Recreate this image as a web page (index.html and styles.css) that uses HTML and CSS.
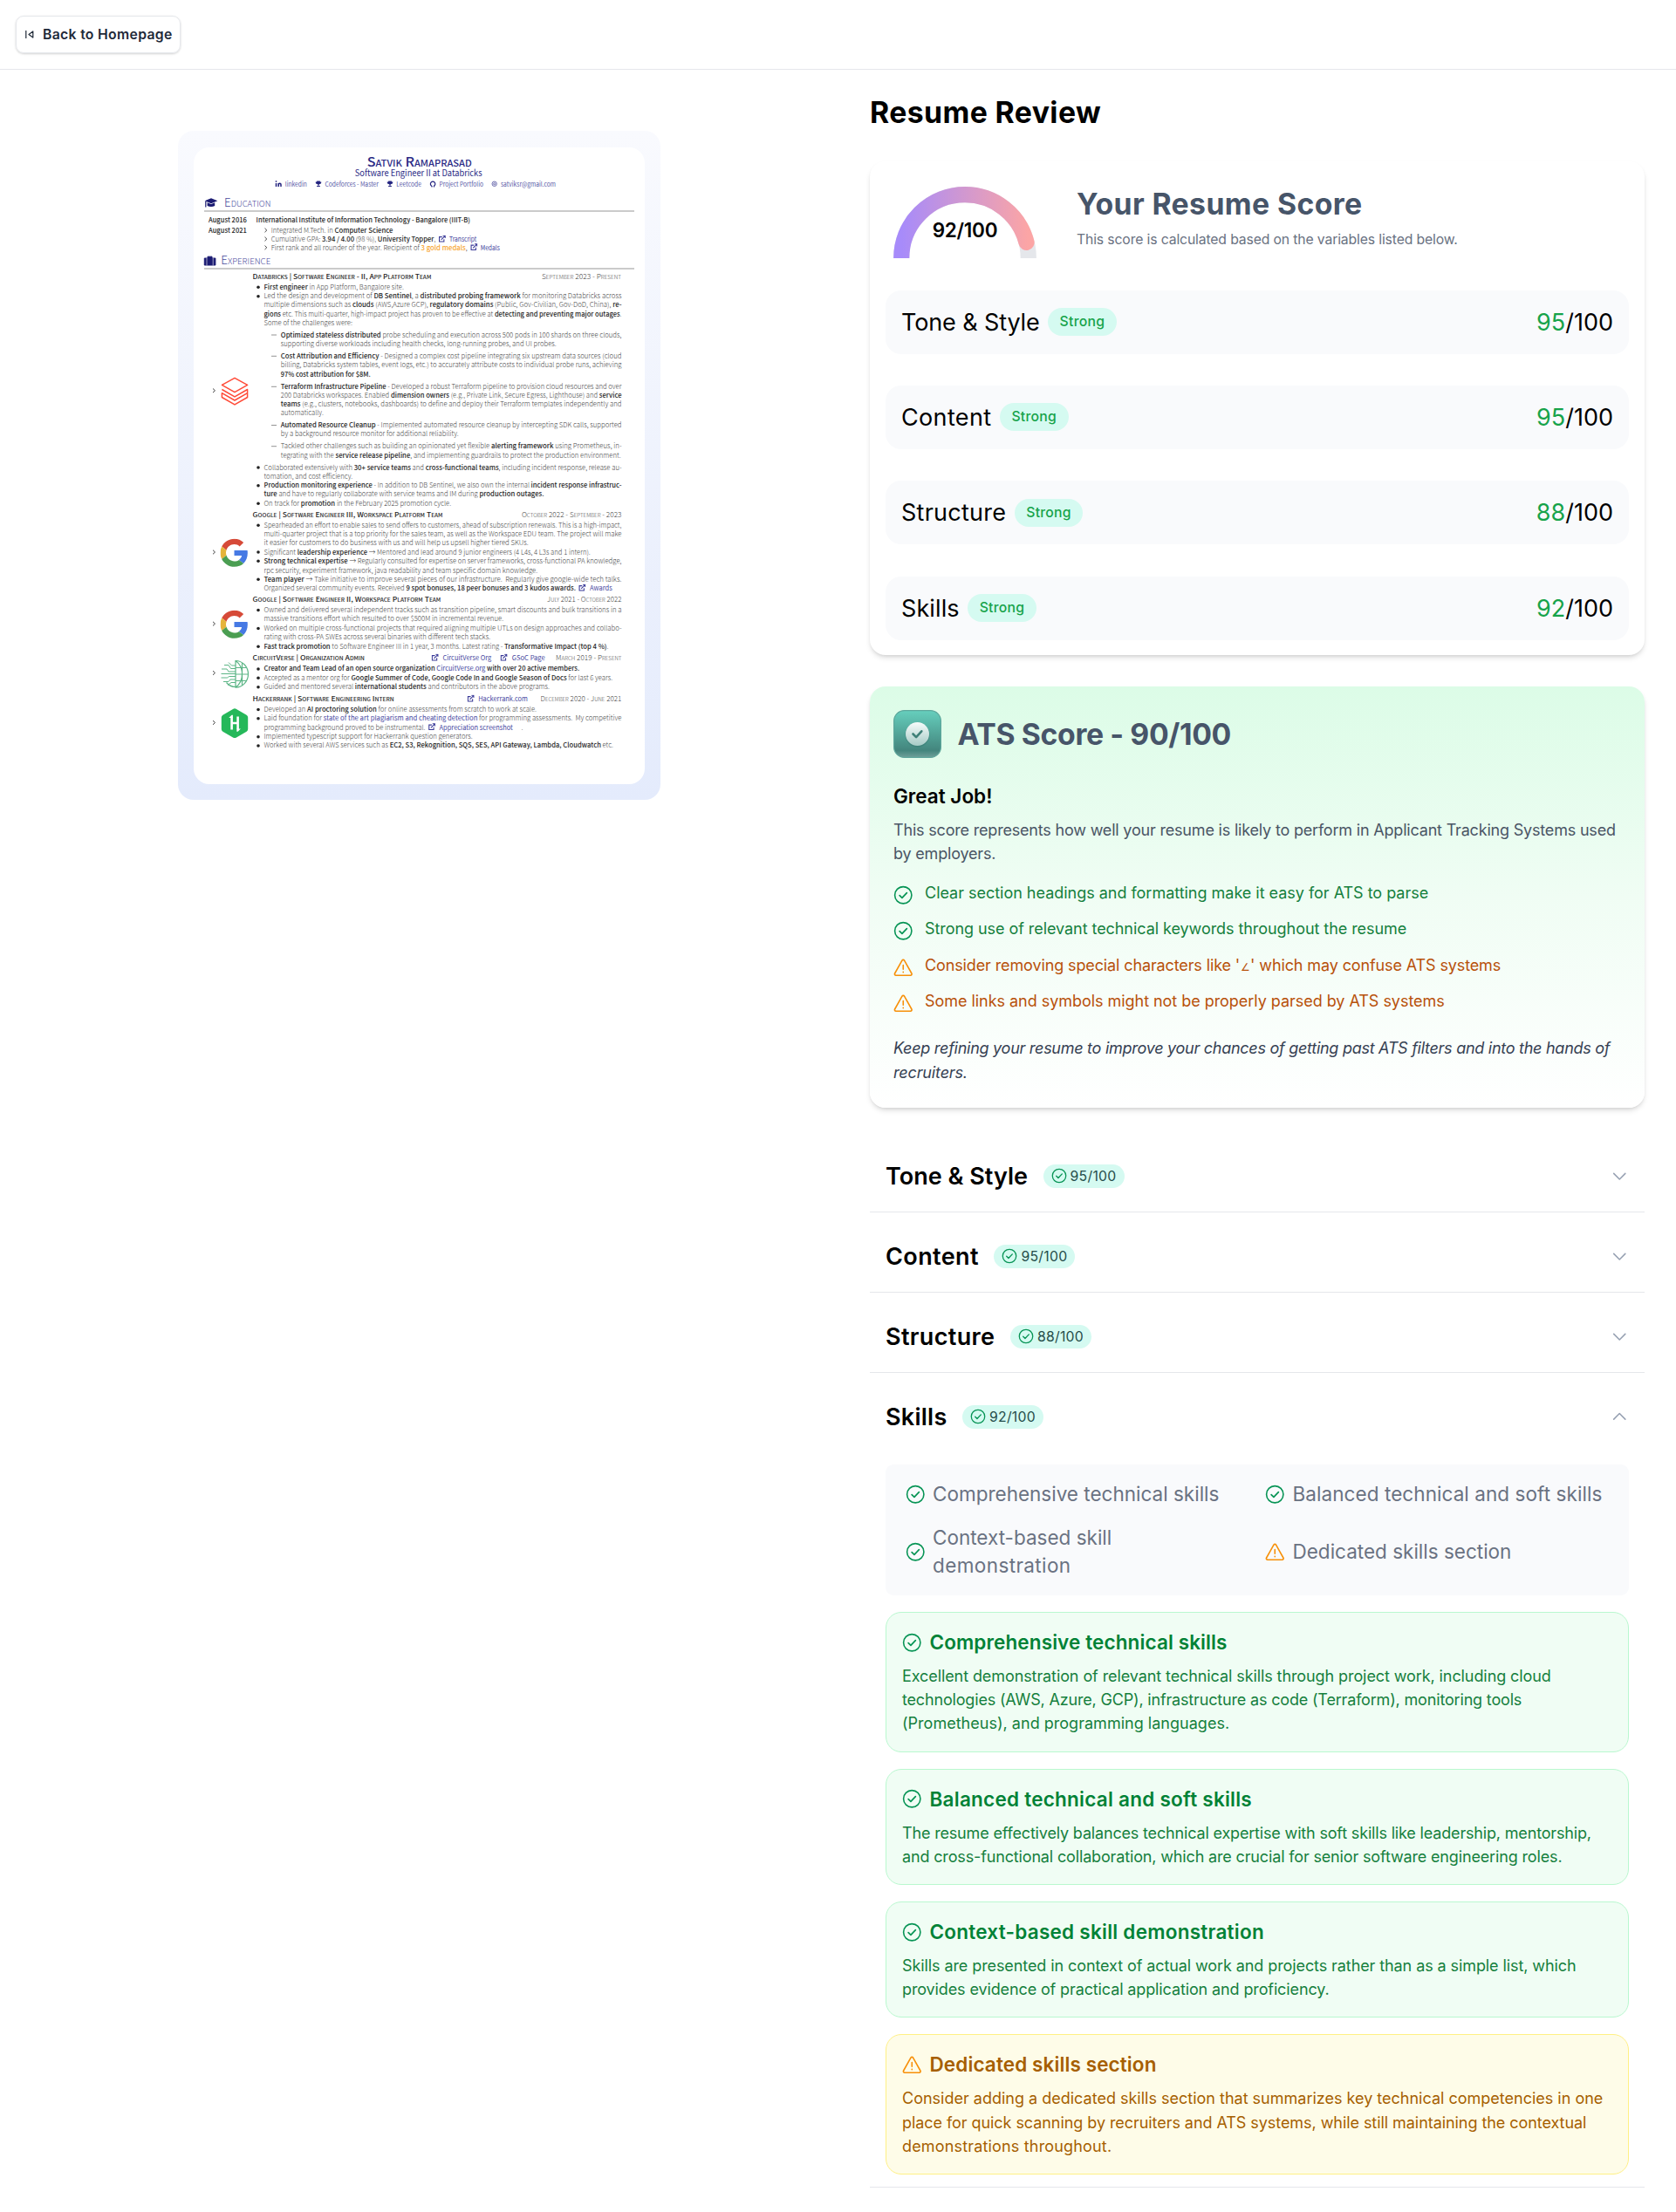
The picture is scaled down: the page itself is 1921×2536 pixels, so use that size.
FILE: index.html
```html
<!DOCTYPE html>
<html lang="en">
<head>
<meta charset="utf-8">
<title>Resume Review</title>
<link rel="stylesheet" href="styles.css">
</head>
<body>
<svg class="defs" aria-hidden="true">
  <symbol id="check" viewBox="0 0 24 24"><circle cx="12" cy="12" r="10.3" fill="none" stroke="#079455" stroke-width="1.7"/><path d="M7.6 12.4l3 3 5.8-6.2" fill="none" stroke="#079455" stroke-width="1.8" stroke-linecap="round" stroke-linejoin="round"/></symbol>
  <symbol id="warn" viewBox="0 0 24 24"><path d="M10.6 3.4L1.7 19.2a1.6 1.6 0 0 0 1.4 2.4h17.8a1.6 1.6 0 0 0 1.4-2.4L13.4 3.4a1.6 1.6 0 0 0-2.8 0z" fill="none" stroke="#f79009" stroke-width="1.7" stroke-linejoin="round"/><path d="M12 9v5M12 17.4v.4" fill="none" stroke="#f79009" stroke-width="1.7" stroke-linecap="round"/></symbol>
  <symbol id="chevron" viewBox="0 0 24 24"><path d="M19 9l-7 7-7-7" fill="none" stroke="#98a2b3" stroke-width="1.7" stroke-linecap="round" stroke-linejoin="round"/></symbol>
  <symbol id="ext" viewBox="0 0 16 16"><path d="M12 9v5H2V4h6M6 10l8-8M9.500 1.500H14.500V6.500" fill="none" stroke="#3a3a98" stroke-width="2"/></symbol>
  <symbol id="trophy" viewBox="0 0 16 16"><path d="M4 1h8v2h3c0 4-1.500 5-4 5.500L9 10v3h3v2H4v-2h3v-3L5 8.500C2.500 8 1 7 1 3h3z" fill="#23237f"/></symbol>
  <symbol id="google" viewBox="0 0 48 48"><path d="M24 9.500c3.540 0 6.710 1.220 9.210 3.600l6.850-6.850C35.900 2.380 30.470 0 24 0 14.620 0 6.510 5.380 2.560 13.220l7.980 6.190C12.430 13.720 17.740 9.500 24 9.500z" fill="#d64a38"/><path d="M46.980 24.550c0-1.570-.15-3.090-.38-4.550H24v9.020h12.940c-.58 2.960-2.260 5.480-4.780 7.180l7.730 6c4.510-4.180 7.090-10.360 7.090-17.650z" fill="#4679e4"/><path d="M10.530 28.590A14.500 14.500 0 0 1 9.770 24c0-1.600.27-3.140.76-4.590l-7.980-6.190A23.900 23.900 0 0 0 0 24c0 3.880.92 7.540 2.560 10.780l7.970-6.190z" fill="#e5b43a"/><path d="M24 48c6.480 0 11.930-2.130 15.890-5.810l-7.730-6c-2.150 1.450-4.920 2.300-8.160 2.300-6.260 0-11.570-4.220-13.470-9.910l-7.980 6.190C6.510 42.620 14.620 48 24 48z" fill="#4b9e52"/></symbol>
</svg>

<nav class="nav">
  <a class="back">
    <svg class="back-icon" viewBox="0 0 10 9"><path d="M.8 0v9M8.800 .9v7.200L4 4.500z" fill="none" stroke="#1f2937" stroke-width="1.200" stroke-linejoin="round"/></svg>
    <span class="back-text">Back to Homepage</span>
  </a>
</nav>

<main class="layout">
  <section class="preview">
    <div class="frame">
      <svg class="resume" viewBox="222 169 517 730" role="img" aria-label="Resume of Satvik Ramaprasad">
        <g class="navy">
          <text class="name sc" x="420.700" y="191.300" textLength="120" lengthAdjust="spacingAndGlyphs">Satvik Ramaprasad</text>
          <text class="role" x="406.800" y="201.500" textLength="145.700" lengthAdjust="spacingAndGlyphs">Software Engineer II at Databricks</text>
        </g>
        <g class="link">
          <text x="326.800" y="213.700" textLength="25" lengthAdjust="spacingAndGlyphs">linkedin</text>
          <text x="372.500" y="213.700" textLength="61.400" lengthAdjust="spacingAndGlyphs">Codeforces - Master</text>
          <text x="454.300" y="213.700" textLength="28.600" lengthAdjust="spacingAndGlyphs">Leetcode</text>
          <text x="503.600" y="213.700" textLength="50.400" lengthAdjust="spacingAndGlyphs">Project Portfolio</text>
          <text x="574" y="213.700" textLength="63" lengthAdjust="spacingAndGlyphs">satviksr@gmail.com</text>
        </g>
        <path d="M316.500 210v4M316.500 207.300v1.400M319.200 214v-4M319.200 211.500c0-1.600 2.800-1.600 2.800 0v2.500" fill="none" stroke="#23237f" stroke-width="1.500"/>
        <use href="#trophy" x="361" y="207" width="8" height="7.500"/>
        <use href="#trophy" x="443" y="207" width="8" height="7.500"/>
        <path d="M494.700 213.200a2.700 2.700 0 1 1 2.800 0v1.300M495 214.500v-1.500" fill="none" stroke="#23237f" stroke-width="1.200"/>
        <circle cx="566.700" cy="210.800" r="2.700" fill="none" stroke="#4a4a9c" stroke-width=".8"/><circle cx="566.700" cy="210.800" r="1.100" fill="none" stroke="#4a4a9c" stroke-width=".8"/>
        <path d="M234.600 230.200l7.400-3 7.400 3-7.400 3zM237.600 232.200v3.800q4.400 2.200 8.600 0v-3.800l-4.200 1.800zM235.200 231v6.500h1.200v-6.500z" fill="#1b1b72"/>
        <text class="head sc" x="257.100" y="237" textLength="53.300" lengthAdjust="spacingAndGlyphs">Education</text>
        <path d="M234 242h493M234 308h493" stroke="#cbcbcb" stroke-width="1.800"/>
        <path d="M234.300 296h12.600v8h-12.600zM238 296v-1.800h5v1.800" fill="#1b1b72" stroke="#1b1b72" stroke-width="1"/><path d="M237 295.500v9M244.200 295.500v9" stroke="#fff" stroke-width=".6"/>
        <text class="head sc" x="253.200" y="303.300" textLength="57" lengthAdjust="spacingAndGlyphs">Experience</text>

        <g class="body">
          <text class="b" x="239" y="255.300" textLength="43.900" lengthAdjust="spacingAndGlyphs">August 2016</text>
          <text class="b" x="293.600" y="255.300" textLength="245.400" lengthAdjust="spacingAndGlyphs">International Institute of Information Technology - Bangalore (IIIT-B)</text>
          <text class="b" x="239" y="266.700" textLength="43.900" lengthAdjust="spacingAndGlyphs">August 2021</text>
          <text x="310.700" y="266.700" textLength="139.700" lengthAdjust="spacingAndGlyphs">Integrated M.Tech. in <tspan class="b">Computer Science</tspan></text>
          <text x="310.700" y="277" textLength="188.600" lengthAdjust="spacingAndGlyphs">Cumulative GPA: <tspan class="b">3.94 / 4.00</tspan> (98 %), <tspan class="b">University Topper</tspan>,</text>
          <text class="l" x="515" y="277" textLength="31.400" lengthAdjust="spacingAndGlyphs">Transcript</text>
          <text x="310.700" y="286.700" textLength="225" lengthAdjust="spacingAndGlyphs">First rank and all rounder of the year. Recipient of <tspan class="gold">3 gold medals</tspan>,</text>
          <text class="l" x="550.700" y="286.700" textLength="22.200" lengthAdjust="spacingAndGlyphs">Medals</text>

          <text class="b sc" x="289.600" y="319.700" textLength="204.700" lengthAdjust="spacingAndGlyphs">Databricks | Software Engineer - II, App Platform Team</text>
          <text class="sc" x="621" y="319.700" textLength="91" lengthAdjust="spacingAndGlyphs">September 2023 - Present</text>
          <text x="302.500" y="331.700" textLength="160.400" lengthAdjust="spacingAndGlyphs"><tspan class="b">First engineer</tspan> in App Platform, Bangalore site.</text>
          <text x="302.500" y="342.300" textLength="410" lengthAdjust="spacingAndGlyphs">Led the design and development of <tspan class="b">DB Sentinel</tspan>, a <tspan class="b">distributed probing framework</tspan> for monitoring Databricks across</text>
          <text x="302.500" y="352.300" textLength="410" lengthAdjust="spacingAndGlyphs">multiple dimensions such as <tspan class="b">clouds</tspan> (AWS,Azure GCP), <tspan class="b">regulatory domains</tspan> (Public, Gov-Civilian, Gov-DoD, China), <tspan class="b">re-</tspan></text>
          <text x="302.500" y="363" textLength="410" lengthAdjust="spacingAndGlyphs"><tspan class="b">gions</tspan> etc. This multi-quarter, high-impact project has proven to be effective at <tspan class="b">detecting and preventing major outages</tspan>.</text>
          <text x="302.500" y="373.300" textLength="101.400" lengthAdjust="spacingAndGlyphs">Some of the challenges were:</text>
          <text x="321.800" y="386.700" textLength="390.700" lengthAdjust="spacingAndGlyphs"><tspan class="b">Optimized stateless distributed</tspan> probe scheduling and execution across 500 pods in 100 shards on three clouds,</text>
          <text x="321.800" y="397" textLength="316" lengthAdjust="spacingAndGlyphs">supporting diverse workloads including health checks, long-running probes, and UI probes.</text>
          <text x="321.800" y="410.700" textLength="390.700" lengthAdjust="spacingAndGlyphs"><tspan class="b">Cost Attribution and Efficiency</tspan> - Designed a complex cost pipeline integrating six upstream data sources (cloud</text>
          <text x="321.800" y="421.300" textLength="390.700" lengthAdjust="spacingAndGlyphs">billing, Databricks system tables, event logs, etc.) to accurately attribute costs to individual probe runs, achieving</text>
          <text class="b" x="321.800" y="431.700" textLength="102.900" lengthAdjust="spacingAndGlyphs">97% cost attribution for $8M.</text>
          <text x="321.800" y="445.700" textLength="390.700" lengthAdjust="spacingAndGlyphs"><tspan class="b">Terraform Infrastructure Pipeline</tspan> - Developed a robust Terraform pipeline to provision cloud resources and over</text>
          <text x="321.800" y="456" textLength="390.700" lengthAdjust="spacingAndGlyphs">200 Databricks workspaces. Enabled <tspan class="b">dimension owners</tspan> (e.g., Private Link, Secure Egress, Lighthouse) and <tspan class="b">service</tspan></text>
          <text x="321.800" y="466" textLength="390.700" lengthAdjust="spacingAndGlyphs"><tspan class="b">teams</tspan> (e.g., clusters, notebooks, dashboards) to define and deploy their Terraform templates independently and</text>
          <text x="321.800" y="476.300" textLength="49" lengthAdjust="spacingAndGlyphs">automatically.</text>
          <text x="321.800" y="490" textLength="390.700" lengthAdjust="spacingAndGlyphs"><tspan class="b">Automated Resource Cleanup</tspan> - Implemented automated resource cleanup by intercepting SDK calls, supported</text>
          <text x="321.800" y="500.300" textLength="203.900" lengthAdjust="spacingAndGlyphs">by a background resource monitor for additional reliability.</text>
          <text x="321.800" y="514" textLength="390.700" lengthAdjust="spacingAndGlyphs">Tackled other challenges such as building an opinionated yet flexible <tspan class="b">alerting framework</tspan> using Prometheus, in-</text>
          <text x="321.800" y="524.700" textLength="390" lengthAdjust="spacingAndGlyphs">tegrating with the <tspan class="b">service release pipeline</tspan>, and implementing guardrails to protect the production environment.</text>
          <text x="302.500" y="538.700" textLength="410" lengthAdjust="spacingAndGlyphs">Collaborated extensively with <tspan class="b">30+ service teams</tspan> and <tspan class="b">cross-functional teams</tspan>, including incident response, release au-</text>
          <text x="302.500" y="548.700" textLength="101.800" lengthAdjust="spacingAndGlyphs">tomation, and cost efficiency.</text>
          <text x="302.500" y="559.300" textLength="410" lengthAdjust="spacingAndGlyphs"><tspan class="b">Production monitoring experience</tspan> - In addition to DB Sentinel, we also own the internal <tspan class="b">incident response infrastruc-</tspan></text>
          <text x="302.500" y="569.300" textLength="321" lengthAdjust="spacingAndGlyphs"><tspan class="b">ture</tspan> and have to regularly collaborate with service teams and IM during <tspan class="b">production outages.</tspan></text>
          <text x="302.500" y="579.700" textLength="214.600" lengthAdjust="spacingAndGlyphs">On track for <tspan class="b">promotion</tspan> in the February 2025 promotion cycle.</text>

          <text class="b sc" x="289.600" y="592.700" textLength="217.900" lengthAdjust="spacingAndGlyphs">Google | Software Engineer III, Workspace Platform Team</text>
          <text class="sc" x="597.900" y="592.700" textLength="114.600" lengthAdjust="spacingAndGlyphs">October 2022 - September - 2023</text>
          <text x="302.500" y="604.700" textLength="410" lengthAdjust="spacingAndGlyphs">Spearheaded an effort to enable sales to send offers to customers, ahead of subscription renewals. This is a high-impact,</text>
          <text x="302.500" y="615" textLength="410" lengthAdjust="spacingAndGlyphs">multi-quarter project that is a top priority for the sales team, as well as the Workspace EDU team. The project will make</text>
          <text x="302.500" y="625.300" textLength="303.200" lengthAdjust="spacingAndGlyphs">it easier for customers to do business with us and will help us upsell higher tiered SKUs.</text>
          <text x="302.500" y="635.700" textLength="374.300" lengthAdjust="spacingAndGlyphs">Significant <tspan class="b">leadership experience</tspan> → Mentored and lead around 9 junior engineers (4 L4s, 4 L3s and 1 intern).</text>
          <text x="302.500" y="646" textLength="410" lengthAdjust="spacingAndGlyphs"><tspan class="b">Strong technical expertise</tspan> → Regularly consulted for expertise on server frameworks, cross-functional PA knowledge,</text>
          <text x="302.500" y="656.700" textLength="313.600" lengthAdjust="spacingAndGlyphs">rpc security, experiment framework, java readability and team specific domain knowledge.</text>
          <text x="302.500" y="667" textLength="410" lengthAdjust="spacingAndGlyphs"><tspan class="b">Team player</tspan> → Take initiative to improve several pieces of our infrastructure.&#160; Regularly give google-wide tech talks.</text>
          <text x="302.500" y="677" textLength="357.500" lengthAdjust="spacingAndGlyphs">Organized several community events. Received <tspan class="b">9 spot bonuses, 18 peer bonuses and 3 kudos awards.</tspan></text>
          <text class="l" x="676" y="677" textLength="25.800" lengthAdjust="spacingAndGlyphs">Awards</text>

          <text class="b sc" x="289.600" y="690" textLength="215.700" lengthAdjust="spacingAndGlyphs">Google | Software Engineer II, Workspace Platform Team</text>
          <text class="sc" x="627.100" y="690" textLength="85.300" lengthAdjust="spacingAndGlyphs">July 2021 - October 2022</text>
          <text x="302.500" y="702" textLength="410" lengthAdjust="spacingAndGlyphs">Owned and delivered several independent tracks such as transition pipeline, smart discounts and bulk transitions in a</text>
          <text x="302.500" y="712.300" textLength="274.600" lengthAdjust="spacingAndGlyphs">massive transitions effort which resulted to over $500M in incremental revenue.</text>
          <text x="302.500" y="723" textLength="410" lengthAdjust="spacingAndGlyphs">Worked on multiple cross-functional projects that required aligning multiple UTLs on design approaches and collabo-</text>
          <text x="302.500" y="733.300" textLength="259.600" lengthAdjust="spacingAndGlyphs">rating with cross-PA SWEs across several binaries with different tech stacks.</text>
          <text x="302.500" y="744" textLength="395" lengthAdjust="spacingAndGlyphs"><tspan class="b">Fast track promotion</tspan> to Software Engineer III in 1 year, 3 months. Latest rating - <tspan class="b">Transformative Impact (top 4 %)</tspan>.</text>

          <text class="b sc" x="289.600" y="757.300" textLength="128.200" lengthAdjust="spacingAndGlyphs">CircuitVerse | Organization Admin</text>
          <text class="l" x="507.500" y="757.300" textLength="55.700" lengthAdjust="spacingAndGlyphs">CircuitVerse Org</text>
          <text class="l" x="586.800" y="757.300" textLength="37.900" lengthAdjust="spacingAndGlyphs">GSoC Page</text>
          <text class="sc" x="637.100" y="757.300" textLength="75.400" lengthAdjust="spacingAndGlyphs">March 2019 - Present</text>
          <text class="b" x="302.500" y="769.300" textLength="361.800" lengthAdjust="spacingAndGlyphs">Creator and Team Lead of an open source organization <tspan class="l">CircuitVerse.org</tspan> with over 20 active members.</text>
          <text x="302.500" y="780" textLength="399.600" lengthAdjust="spacingAndGlyphs">Accepted as a mentor org for <tspan class="b">Google Summer of Code, Google Code In and Google Season of Docs</tspan> for last 6 years.</text>
          <text x="302.500" y="790" textLength="327.500" lengthAdjust="spacingAndGlyphs">Guided and mentored several <tspan class="b">international students</tspan> and contributors in the above programs.</text>

          <text class="b sc" x="289.600" y="804" textLength="162" lengthAdjust="spacingAndGlyphs">Hackerrank | Software Engineering Intern</text>
          <text class="l" x="548.200" y="804" textLength="56.800" lengthAdjust="spacingAndGlyphs">Hackerrank.com</text>
          <text class="sc" x="619.600" y="804" textLength="92.800" lengthAdjust="spacingAndGlyphs">December 2020 - June 2021</text>
          <text x="302.500" y="816" textLength="312.500" lengthAdjust="spacingAndGlyphs">Developed an <tspan class="b">AI proctoring solution</tspan> for online assessments from scratch to work at scale.</text>
          <text x="302.500" y="826.300" textLength="410" lengthAdjust="spacingAndGlyphs">Laid foundation for <tspan class="l">state of the art plagiarism and cheating detection</tspan> for programming assessments.&#160; My competitive</text>
          <text x="302.500" y="836.700" textLength="185" lengthAdjust="spacingAndGlyphs">programming background proved to be instrumental.</text>
          <text class="l" x="503.600" y="836.700" textLength="84.300" lengthAdjust="spacingAndGlyphs">Appreciation screenshot</text>
          <text x="597.500" y="836.700">.</text>
          <text x="302.500" y="847" textLength="239.300" lengthAdjust="spacingAndGlyphs">Implemented typescript support for Hackerrank question generators.</text>
          <text x="302.500" y="857.300" textLength="400.400" lengthAdjust="spacingAndGlyphs">Worked with several AWS services such as <tspan class="b">EC2, S3, Rekognition, SQS, SES, API Gateway, Lambda, Cloudwatch</tspan> etc.</text>
        </g>

        <g fill="#222">
          <circle cx="296" cy="329.300" r="1.800"/><circle cx="296" cy="339.700" r="1.800"/><circle cx="296" cy="536" r="1.800"/><circle cx="296" cy="556.700" r="1.800"/><circle cx="296" cy="577.300" r="1.800"/><circle cx="296" cy="602.300" r="1.800"/><circle cx="296" cy="633" r="1.800"/><circle cx="296" cy="643.300" r="1.800"/><circle cx="296" cy="664.300" r="1.800"/><circle cx="296" cy="699.500" r="1.800"/><circle cx="296" cy="720.500" r="1.800"/><circle cx="296" cy="741.300" r="1.800"/><circle cx="296" cy="767" r="1.800"/><circle cx="296" cy="777.300" r="1.800"/><circle cx="296" cy="787.700" r="1.800"/><circle cx="296" cy="813.500" r="1.800"/><circle cx="296" cy="823.700" r="1.800"/><circle cx="296" cy="844.700" r="1.800"/><circle cx="296" cy="855" r="1.800"/>
        </g>
        <path d="M311 384h6M311 408.300h6M311 443.300h6M311 487.500h6M311 511.700h6" stroke="#888" stroke-width=".9"/>
        <path d="M303.500 261.800l2.300 2.200-2.300 2.200M303.500 271.800l2.300 2.200-2.300 2.200M303.500 281.600l2.300 2.200-2.300 2.200M244 445.500l2.500 2.300-2.500 2.300M244 630.700l2.500 2.300-2.500 2.300M244 712.800l2.500 2.300-2.500 2.300M244 769.200l2.500 2.300-2.500 2.300M244 826.200l2.500 2.300-2.500 2.300" fill="none" stroke="#444" stroke-width="1"/>
        <use href="#ext" x="502.500" y="269.500" width="8.500" height="8.500"/><use href="#ext" x="539" y="279" width="8.500" height="8.500"/>
        <use href="#ext" x="663" y="669.500" width="8.500" height="8.500"/><use href="#ext" x="494.300" y="749.500" width="8.500" height="8.500"/><use href="#ext" x="573.200" y="749.500" width="8.500" height="8.500"/><use href="#ext" x="535.300" y="796.500" width="8.500" height="8.500"/><use href="#ext" x="490.700" y="829" width="8.500" height="8.500"/>

        <g fill="none" stroke="#ff4b38" stroke-width="1.500" stroke-linejoin="round">
          <path d="M269 433.300l14.600 8-14.600 8.400-14.600-8.400zM254.400 446.500l14.600 8.400 14.600-8.400v4.200l-14.600 8.300-14.600-8.300v4.800l14.600 8.400 14.600-8.400v-4.800"/>
        </g>
        <use href="#google" x="252.500" y="617.500" width="32" height="32.500"/>
        <use href="#google" x="252.500" y="699.500" width="32" height="32.500"/>
        <g fill="none" stroke="#5cb586" stroke-width="1.200">
          <path d="M270 757.500a14.500 15.300 0 0 1 0 30.600zM270 757.500c10 7 10 23.600 0 30.600M277.500 760v25.500M270 765.500h12M270 773h14M270 780.500h12M270 787.500c-4.500 0-8-2-10.500-5"/>
          <path d="M254 767h6l2 3h8M257 762.500h5l2.500 4H270M262 759.500l3.500 3.500H270M253.500 772.500h16.500M253.500 777h7l2-1.500h7.500M256 781.500h6l2-2.500h6M261 785.500l4-3h5" stroke-width="1"/>
        </g>
        <path d="M269 812.300q1 0 2 .6l11.600 6.800q1.600 1 1.600 2.800v13.400q0 1.800-1.600 2.800L271 845.400q-2 1-4 0l-11.600-6.700q-1.600-1-1.600-2.800v-13.400q0-1.800 1.600-2.800l11.600-6.800q1-.6 2-.6z" fill="#25b85a"/>
        <path d="M265.600 822v14.500M272.600 821.500v14.500M265.600 829h7" fill="none" stroke="#fff" stroke-width="2.600"/>
        <path d="M262.300 823l3.300-3.200 1.300 0v3.200zM275.900 835.500l-3.300 3.200-1.300 0v-3.200z" fill="#fff"/>
      </svg>
    </div>
  </section>

  <section class="review">
    <h1 class="title">Resume Review</h1>

    <div class="card score">
      <div class="score-head">
        <div class="gauge">
          <svg class="gauge-svg" viewBox="0 0 100 50">
            <defs><linearGradient id="g" x1="0" x2="1" y1="0" y2="0"><stop offset="0" stop-color="#a78bfa"/><stop offset="1" stop-color="#fca5a5"/></linearGradient></defs>
            <path d="M10 50a40 40 0 0 1 80 0" fill="none" stroke="#e5e7eb" stroke-width="10"/>
            <path d="M10 50a40 40 0 0 1 80 0" fill="none" stroke="url(#g)" stroke-width="10" stroke-linecap="round" pathLength="100" stroke-dasharray="92 200"/>
          </svg>
          <span class="gauge-text">92/100</span>
        </div>
        <div class="score-copy">
          <h2 class="h2 t40">Your Resume Score</h2>
          <p class="small">This score is calculated based on the variables listed below.</p>
        </div>
      </div>
      <div class="rows">
        <div class="row"><span class="row-name n12">Tone &amp; Style</span><span class="badge">Strong</span><span class="row-score"><span class="good">95</span>/100</span></div>
        <div class="row"><span class="row-name t35">Content</span><span class="badge">Strong</span><span class="row-score"><span class="good">95</span>/100</span></div>
        <div class="row"><span class="row-name t25">Structure</span><span class="badge">Strong</span><span class="row-score"><span class="good">88</span>/100</span></div>
        <div class="row"><span class="row-name t11">Skills</span><span class="badge">Strong</span><span class="row-score"><span class="good">92</span>/100</span></div>
      </div>
    </div>

    <div class="card ats">
      <div class="ats-head">
        <svg class="ats-icon" viewBox="0 0 55 55">
          <defs>
            <linearGradient id="tile" x1="0" x2="0" y1="0" y2="1"><stop offset="0" stop-color="#66cfbd"/><stop offset=".85" stop-color="#43857d"/><stop offset="1" stop-color="#6f9f99"/></linearGradient>
            <linearGradient id="disc" x1="0" x2="0" y1="0" y2="1"><stop offset="0" stop-color="#f7fcfb"/><stop offset="1" stop-color="#a6cbc6"/></linearGradient>
          </defs>
          <rect x=".6" y=".6" width="53.800" height="53.800" rx="12" fill="url(#tile)" stroke="#5ea79c" stroke-width="1.200"/>
          <circle cx="27.500" cy="28.500" r="14" fill="#2f6f67" opacity=".35"/>
          <circle cx="27.500" cy="27.500" r="13.500" fill="url(#disc)"/>
          <path d="M22.500 27.500l3.600 3.600 6.200-6.800" fill="none" stroke="#3f8078" stroke-width="2.600" stroke-linecap="round" stroke-linejoin="round"/>
        </svg>
        <h2 class="h2 n37">ATS Score - 90/100</h2>
      </div>
      <h3 class="great">Great Job!</h3>
      <p class="para gray"><span class="ln n19">This score represents how well your resume is likely to perform in Applicant Tracking Systems used</span><span class="ln n19">by employers.</span></p>
      <ul class="tips">
        <li class="tip ok"><svg class="icon"><use href="#check"/></svg><span class="ln n02">Clear section headings and formatting make it easy for ATS to parse</span></li>
        <li class="tip ok"><svg class="icon"><use href="#check"/></svg><span class="ln n06">Strong use of relevant technical keywords throughout the resume</span></li>
        <li class="tip amber"><svg class="icon"><use href="#warn"/></svg><span class="ln n12">Consider removing special characters like '<span class="angle">∠</span>' which may confuse ATS systems</span></li>
        <li class="tip amber"><svg class="icon"><use href="#warn"/></svg><span class="ln n04">Some links and symbols might not be properly parsed by ATS systems</span></li>
      </ul>
      <p class="para closing"><span class="ln n27">Keep refining your resume to improve your chances of getting past ATS filters and into the hands of</span><span class="ln n15">recruiters.</span></p>
    </div>

    <div class="accordion">
      <div class="item"><div class="item-head"><span class="item-name t02">Tone &amp; Style</span><span class="pill"><svg class="pill-icon"><use href="#check"/></svg>95/100</span><svg class="chev"><use href="#chevron"/></svg></div></div>
      <div class="item"><div class="item-head"><span class="item-name t40">Content</span><span class="pill"><svg class="pill-icon"><use href="#check"/></svg>95/100</span><svg class="chev"><use href="#chevron"/></svg></div></div>
      <div class="item"><div class="item-head"><span class="item-name t35">Structure</span><span class="pill"><svg class="pill-icon"><use href="#check"/></svg>88/100</span><svg class="chev"><use href="#chevron"/></svg></div></div>
      <div class="item open">
        <div class="item-head"><span class="item-name t25">Skills</span><span class="pill"><svg class="pill-icon"><use href="#check"/></svg>92/100</span><svg class="chev up"><use href="#chevron"/></svg></div>
        <div class="content">
          <div class="summary">
            <div class="sum"><svg class="icon"><use href="#check"/></svg><span class="ln">Comprehensive technical skills</span></div>
            <div class="sum"><svg class="icon"><use href="#check"/></svg><span class="ln t07">Balanced technical and soft skills</span></div>
            <div class="sum"><svg class="icon"><use href="#check"/></svg><span><span class="ln">Context-based skill</span><span class="ln t40">demonstration</span></span></div>
            <div class="sum"><svg class="icon"><use href="#warn"/></svg><span class="ln">Dedicated skills section</span></div>
          </div>
          <div class="note green">
            <div class="note-head"><svg class="icon"><use href="#check"/></svg><span class="ln t11">Comprehensive technical skills</span></div>
            <p class="para"><span class="ln n09">Excellent demonstration of relevant technical skills through project work, including cloud</span><span class="ln n17">technologies (AWS, Azure, GCP), infrastructure as code (Terraform), monitoring tools</span><span class="ln t02">(Prometheus), and programming languages.</span></p>
          </div>
          <div class="note green">
            <div class="note-head"><svg class="icon"><use href="#check"/></svg><span class="ln t25">Balanced technical and soft skills</span></div>
            <p class="para"><span class="ln n17">The resume effectively balances technical expertise with soft skills like leadership, mentorship,</span><span class="ln n15">and cross-functional collaboration, which are crucial for senior software engineering roles.</span></p>
          </div>
          <div class="note green">
            <div class="note-head"><svg class="icon"><use href="#check"/></svg><span class="ln t25">Context-based skill demonstration</span></div>
            <p class="para"><span class="ln n09">Skills are presented in context of actual work and projects rather than as a simple list, which</span><span class="ln n12">provides evidence of practical application and proficiency.</span></p>
          </div>
          <div class="note yellow">
            <div class="note-head"><svg class="icon"><use href="#warn"/></svg><span class="ln t11">Dedicated skills section</span></div>
            <p class="para"><span class="ln">Consider adding a dedicated skills section that summarizes key technical competencies in one</span><span class="ln n06">place for quick scanning by recruiters and ATS systems, while still maintaining the contextual</span><span class="ln t17">demonstrations throughout.</span></p>
          </div>
        </div>
      </div>
    </div>
  </section>
</main>
</body>
</html>
```
FILE: styles.css
```css
* { box-sizing: border-box; }
body, h1, h2, h3, p, ul { margin: 0; padding: 0; }
body { background: #fff; color: #000; font-family: Inter, "Liberation Sans", sans-serif; font-size: 18px; line-height: 27px; }
ul { list-style: none; }
svg { display: block; flex: none; }
.defs { display: none; }

/* per-line tracking */
.n37 { letter-spacing: -.37px; }
.n27 { letter-spacing: -.27px; }
.n19 { letter-spacing: -.19px; }
.n17 { letter-spacing: -.17px; }
.n15 { letter-spacing: -.15px; }
.n12 { letter-spacing: -.12px; }
.n09 { letter-spacing: -.09px; }
.n06 { letter-spacing: -.06px; }
.n04 { letter-spacing: -.04px; }
.n02 { letter-spacing: -.02px; }
.t02 { letter-spacing: .02px; }
.t07 { letter-spacing: .07px; }
.t11 { letter-spacing: .11px; }
.t17 { letter-spacing: .17px; }
.t25 { letter-spacing: .25px; }
.t35 { letter-spacing: .35px; }
.t40 { letter-spacing: .4px; }
.ln { display: block; white-space: nowrap; }

.nav { display: flex; height: 80px; padding: 18px; border-bottom: 1px solid #e5e7eb; }
.back { display: flex; align-items: center; gap: 10px; width: 189px; height: 43px; padding: 0 10px; border: 1px solid #e5e7eb; border-radius: 9px; box-shadow: 0 1px 3px rgba(0,0,0,.1), 0 1px 2px rgba(0,0,0,.08); }
.back-icon { width: 10px; height: 9px; }
.back-text { color: #1e2939; font-size: 15.75px; font-weight: 600; letter-spacing: .32px; white-space: nowrap; }

.layout { display: grid; grid-template-columns: 961px 960px; align-items: start; }
.preview { display: flex; justify-content: center; padding-top: 70px; }
.frame { width: 553px; height: 767px; padding: 19px 18px 18px; border-radius: 18px; background: linear-gradient(#f9fafe, #e4ebfc); }
.resume { width: 517px; height: 730px; border-radius: 18px; background: #fff; font-family: "Noto Sans CJK SC", "Noto Sans", sans-serif; }
.sc { font-variant: small-caps; }
.name { font-size: 14.5px; font-weight: 500; }
.role { font-size: 10px; }
.navy { fill: #2a2a85; }
.link { fill: #5a5aa8; font-size: 7.5px; }
.head { fill: #4a4a9c; font-size: 12.5px; font-weight: 300; }
.body { fill: #484848; font-size: 7.9px; font-weight: 300; }
.b { fill: #262626; font-weight: 500; }
.l { fill: #4646a0; font-weight: 400; }
.gold { fill: #f7a52f; font-weight: 500; }

.review { display: flex; flex-direction: column; padding: 29px 36px 31px; }
.title { margin-bottom: 36px; font-size: 33.75px; line-height: 40px; font-weight: 700; letter-spacing: .42px; }
.card { border-radius: 18px; box-shadow: 0 4px 6px -1px rgba(0,0,0,.13), 0 2px 4px -2px rgba(0,0,0,.13); }
.h2 { color: #475569; font-size: 33.75px; line-height: 40px; font-weight: 700; white-space: nowrap; }

.score { height: 566px; padding: 19.5px 18px 18px; }
.score-head { display: flex; align-items: center; gap: 37px; margin-bottom: 37px; }
.gauge { position: relative; width: 182px; height: 91px; }
.gauge-svg { width: 182px; height: 91px; }
.gauge-text { position: absolute; left: 0; right: 0; top: 45px; text-align: center; font-size: 22.5px; font-weight: 600; letter-spacing: -.26px; }
.score-copy { display: flex; flex-direction: column; gap: 9.5px; }
.small { color: #6a7282; font-size: 15.75px; line-height: 22.5px; letter-spacing: -.14px; white-space: nowrap; }
.rows { display: flex; flex-direction: column; gap: 36.4px; }
.row { display: flex; align-items: center; gap: 9.5px; height: 73px; padding: 0 18px; border-radius: 18px; background: #f9fafc; }
.row-name { font-size: 27px; }
.badge { padding: 0 13.5px; border-radius: 16px; background: #d5faf1; color: #16a34a; font-size: 15.75px; font-weight: 500; line-height: 32px; letter-spacing: .25px; }
.row-score { margin-left: auto; font-size: 27px; letter-spacing: .02px; }
.good { color: #16a34a; }

.ats { height: 483px; margin-top: 36px; padding: 27px; background: linear-gradient(#dcfce7, #f0fdf4 50%, #fff); }
.ats-head { display: flex; align-items: center; gap: 18.5px; }
.ats-icon { width: 55px; height: 55px; }
.great { margin-top: 28px; font-size: 22.5px; line-height: 31.5px; font-weight: 600; }
.para { font-size: 18px; line-height: 27.2px; }
.great + .para { margin-top: 9.5px; }
.gray { color: #4a5565; }
.tips { display: flex; flex-direction: column; gap: 13.8px; margin-top: 17.5px; }
.tip { display: flex; gap: 13.5px; }
.tip .icon { margin-top: 5px; }
.icon { width: 22.5px; height: 22.5px; }
.ok { color: #15803d; }
.amber { color: #b8510a; }
.angle { display: inline-block; width: 12px; font-size: 12px; line-height: 12px; text-align: center; }
.closing { margin-top: 27px; color: #364153; font-style: italic; }

.accordion { margin-top: 28px; }
.item { padding-top: 9.5px; border-bottom: 1px solid #e5e7eb; }
.item-head { display: flex; align-items: center; height: 81.5px; padding: 0 18px; }
.item-name { margin-right: 17.5px; font-size: 27px; font-weight: 600; }
.pill { display: flex; align-items: center; gap: 4px; height: 27.5px; padding: 0 9px; border-radius: 14px; background: #d5faf1; color: #254d4a; font-size: 15.75px; letter-spacing: .28px; }
.pill-icon { width: 18px; height: 18px; }
.chev { width: 22.5px; height: 22.5px; margin-left: auto; }
.up { transform: rotate(180deg); }
.content { display: flex; flex-direction: column; gap: 19px; padding: 14px 18px 13.5px; }
.summary { display: grid; grid-template-columns: 1fr 1fr; gap: 18px; height: 150px; padding: 18px 22.5px; border-radius: 9px; background: #f9fafc; color: #6a7282; font-size: 22.5px; line-height: 32px; }
.sum { display: flex; align-items: center; gap: 9px; }
.note { padding: 18px; border: 1px solid; border-radius: 18px; }
.note-head { display: flex; align-items: center; gap: 9px; margin-bottom: 9px; font-size: 22.5px; line-height: 32px; font-weight: 600; }
.green { border-color: #b9f8cf; background: #f0fdf4; color: #15803d; }
.green .note-head { color: #008236; }
.yellow { border-color: #fff085; background: #fefce8; color: #a65f00; }
```
